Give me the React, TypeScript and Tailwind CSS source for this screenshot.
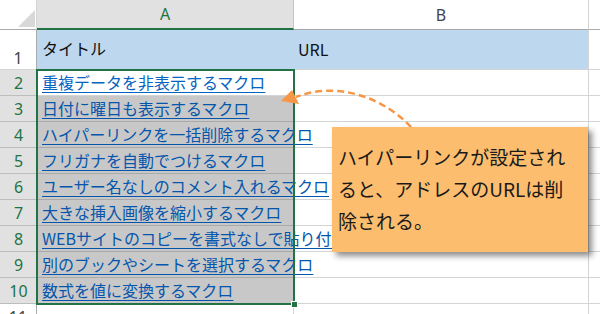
import React from "react";

const JP = { fontFamily: '"Noto Sans CJK JP", "Noto Sans", sans-serif' };
const HD = { fontFamily: '"Noto Sans", "Open Sans", sans-serif' };

const rows = [
  "重複データを非表示するマクロ",
  "日付に曜日も表示するマクロ",
  "ハイパーリンクを一括削除するマクロ",
  "フリガナを自動でつけるマクロ",
  "ユーザー名なしのコメント入れるマクロ",
  "大きな挿入画像を縮小するマクロ",
  "WEBサイトのコピーを書式なしで貼り付けるマクロ",
  "別のブックやシートを選択するマクロ",
  "数式を値に変換するマクロ",
];

export default function App() {
  return (
    <div className="relative w-[600px] h-[314px] overflow-hidden bg-white">
      <div className="grid grid-cols-[37px_257px_295px_11px] grid-rows-[30px_40px_repeat(10,26px)]">
        {/* header row */}
        <div className="relative bg-white border-r border-b border-r-[#d4d4d4] border-b-[#ababab]">
          <svg className="absolute left-0 top-0" width="37" height="30">
            <polygon points="18,27 35,10 35,27" fill="#d8d8d8" />
          </svg>
        </div>
        <div
          className="flex items-center justify-center bg-[#e1e1e1] border-b-2 border-b-[#217346] border-r border-r-[#c6c6c6] text-[16px] text-[#217346]"
          style={HD}
        >
          A
        </div>
        <div
          className="flex items-center justify-center bg-white border-b border-b-[#ababab] border-r border-r-[#d4d4d4] text-[16px] text-[#444]"
          style={HD}
        >
          B
        </div>
        <div className="bg-white border-b border-b-[#ababab]" />

        {/* row 1 */}
        <div
          className="flex items-end justify-center pb-[3px] bg-white border-r border-r-[#ababab] border-b border-b-[#d4d4d4] text-[16px] leading-none text-[#444]"
          style={HD}
        >
          1
        </div>
        <div className="flex items-center pl-[5px] pb-[3px] bg-[#bdd7ee] border-b border-b-[#d4d4d4] text-[16px] text-[#111]" style={JP}>
          タイトル
        </div>
        <div className="flex items-center pl-[4px] pb-[1px] bg-[#bdd7ee] border-b border-b-[#d4d4d4] border-r border-r-[#d4d4d4] text-[16px] text-[#111]" style={JP}>
          URL
        </div>
        <div className="bg-white border-b border-b-[#d4d4d4]" />

        {rows.map((t, i) => {
          const active = i === 0;
          return (
            <React.Fragment key={i}>
              <div
                className="flex items-center justify-center bg-[#e1e1e1] border-b border-b-[#bdbdbd] text-[16px] leading-none text-[#217346]"
                style={HD}
              >
                {i + 2}
              </div>
              <div
                className={
                  active
                    ? "flex items-center pl-[5px] pb-[2px] bg-white border-b border-b-[#d4d4d4] whitespace-nowrap text-[16px] leading-none"
                    : "flex items-center pl-[5px] pb-[2px] bg-[#c8c8c8] border-b border-b-[#a9a9a9] whitespace-nowrap text-[16px] leading-none"
                }
                style={JP}
              >
                <span
                  className={
                    active
                      ? "text-[#0563c1] underline underline-offset-[3px] decoration-[1px]"
                      : "text-[#0456ad] underline underline-offset-[3px] decoration-[1px]"
                  }
                >
                  {t}
                </span>
              </div>
              <div className="border-b border-b-[#d4d4d4] border-r border-r-[#d4d4d4]" />
              <div className="border-b border-b-[#d4d4d4]" />
            </React.Fragment>
          );
        })}

        {/* row 11 */}
        <div
          className="flex items-center justify-center bg-white border-r border-r-[#ababab] text-[16px] leading-none text-[#444]"
          style={HD}
        >
          11
        </div>
        <div className="bg-white border-r border-r-[#d4d4d4]" />
        <div className="bg-white border-r border-r-[#d4d4d4]" />
        <div className="bg-white" />
      </div>

      {/* selection border */}
      <div className="absolute left-[36px] top-[69px] w-[259px] h-[236px] border-2 border-[#217346]" />
      <div className="absolute left-[291px] top-[301px] w-[7px] h-[7px] bg-[#217346] border border-white" />

      {/* dashed arrow */}
      <svg className="absolute left-0 top-0" width="600" height="314">
        <path
          d="M 411 127 C 386 100, 340 80, 296 97"
          fill="none"
          stroke="#f79646"
          strokeWidth="2.5"
          strokeDasharray="7 4"
        />
        <polygon points="281,101 292,90 299,104" fill="#f79646" />
      </svg>

      {/* callout */}
      <div
        className="absolute left-[332px] top-[127px] w-[256px] h-[125px] bg-[#fcbe6e] shadow-[4px_4px_6px_rgba(0,0,0,0.45)] pl-[6px] pt-[14px] text-[19px] leading-[32px] text-[#1a1a1a] whitespace-nowrap"
        style={JP}
      >
        <div>ハイパーリンクが設定され</div>
        <div>ると、アドレスのURLは削</div>
        <div>除される。</div>
      </div>
    </div>
  );
}
